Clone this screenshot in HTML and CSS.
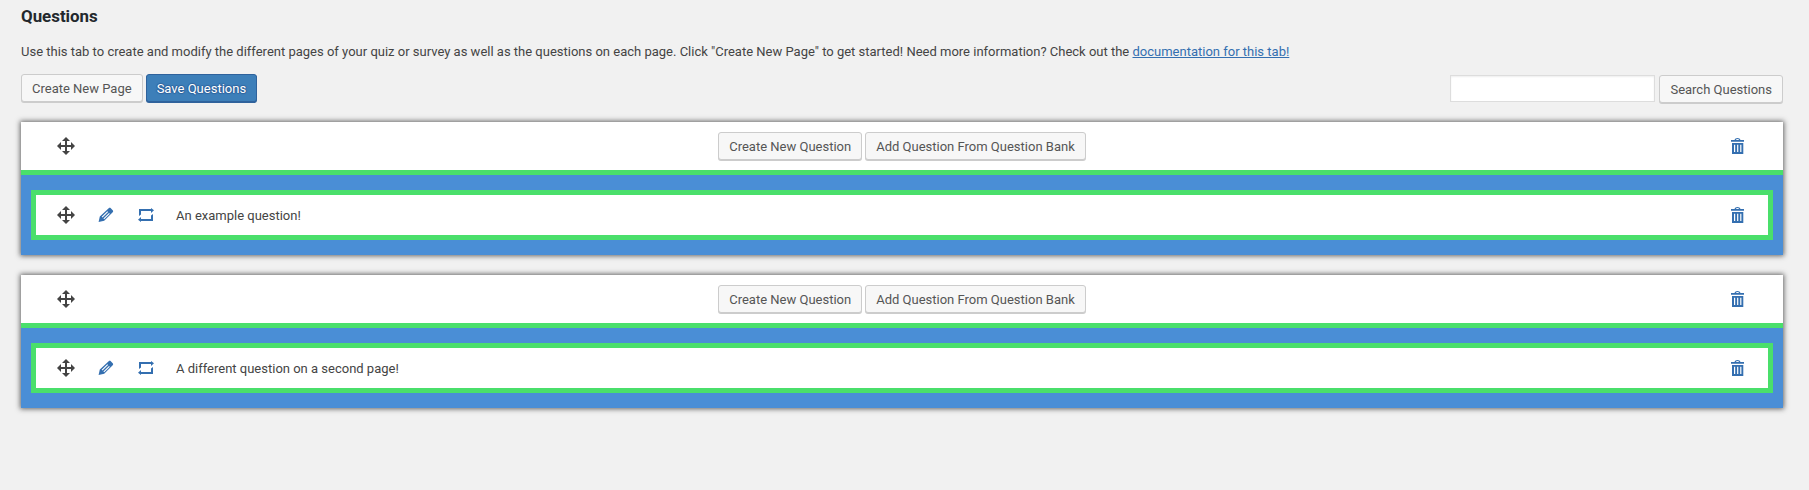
FILE: index.html
```html
<!DOCTYPE html>
<html lang="en">
<head>
<meta charset="utf-8">
<title>Questions</title>
<link rel="stylesheet" href="styles.css">
</head>
<body>
<svg class="sprite" aria-hidden="true">
  <symbol id="move" viewBox="0 0 20 20"><path d="M19 10l-4 4v-3h-4v4h3l-4 4-4-4h3v-4H5v3l-4-4 4-4v3h4V5H6l4-4 4 4h-3v4h4V6z"/></symbol>
  <symbol id="edit" viewBox="0 0 20 20"><path fill-rule="evenodd" d="M12.700 3.300c.6-.6 1.500-.6 2.100 0l1.900 1.900c.6.6.6 1.500 0 2.100L8.200 15.800 2.600 17l1.200-5.400zM11.300 6.200L5.700 11.800l.8.8 5.600-5.600zM13 7.900l-5.600 5.600.8.800 5.600-5.600z"/></symbol>
  <symbol id="repeat" viewBox="0 0 20 20"><path d="M3 11V4h12V3l3 2.300L15 8V6H5v3.500zM17 9v7H5v1l-3-2.300L5 12v2h10v-3.500z"/></symbol>
  <symbol id="trash" viewBox="0 0 20 20"><path fill-rule="evenodd" d="M3 5.800V4h3.500c.3-1.300 1.500-2 3-2s2.700.7 3 2H16v1.800zM7.800 4h3.400c-.3-.6-.9-.9-1.700-.9S8.100 3.400 7.800 4zM4 7h11.300v11H4zM6 8.700V16h1.200V8.700zm3.100 0V16h1.200V8.700zm3.100 0V16h1.200V8.700z"/></symbol>
</svg>
<main class="wrap">
  <h3 class="title">Questions</h3>
  <p class="intro">Use this tab to create and modify the different pages of your quiz or survey as well as the questions on each page. Click "Create New Page" to get started! Need more information? Check out the <a class="link" href="#">documentation for this tab!</a></p>
  <div class="toolbar">
    <div class="group">
      <button class="button">Create New Page</button>
      <button class="button primary">Save Questions</button>
    </div>
    <div class="group search">
      <input class="search-input" type="text" aria-label="Search">
      <button class="button">Search Questions</button>
    </div>
  </div>
  <section class="page">
    <header class="page-header">
      <svg class="icon handle"><use href="#move"/></svg>
      <div class="group">
        <button class="button">Create New Question</button>
        <button class="button">Add Question From Question Bank</button>
      </div>
      <svg class="icon"><use href="#trash"/></svg>
    </header>
    <div class="page-body">
      <div class="question">
        <svg class="icon handle"><use href="#move"/></svg>
        <svg class="icon"><use href="#edit"/></svg>
        <svg class="icon"><use href="#repeat"/></svg>
        <span class="question-text">An example question!</span>
        <svg class="icon"><use href="#trash"/></svg>
      </div>
    </div>
  </section>
  <section class="page">
    <header class="page-header">
      <svg class="icon handle"><use href="#move"/></svg>
      <div class="group">
        <button class="button">Create New Question</button>
        <button class="button">Add Question From Question Bank</button>
      </div>
      <svg class="icon"><use href="#trash"/></svg>
    </header>
    <div class="page-body">
      <div class="question">
        <svg class="icon handle"><use href="#move"/></svg>
        <svg class="icon"><use href="#edit"/></svg>
        <svg class="icon"><use href="#repeat"/></svg>
        <span class="question-text">A different question on a second page!</span>
        <svg class="icon"><use href="#trash"/></svg>
      </div>
    </div>
  </section>
</main>
</body>
</html>
```
FILE: styles.css
```css
* { box-sizing: border-box; }
body { margin: 0; background: #f1f1f1; color: #444; font: 13px/20px Roboto, sans-serif; }
.sprite { display: none; }
.wrap { padding: 6px 26px 0 21px; }
.title { margin: 0; color: #23282d; font-size: 16.9px; line-height: 20px; font-weight: 700; }
.intro { margin: 16px 0 12px; }
.link { color: #346fb0; text-decoration: underline; }
.toolbar { display: flex; justify-content: space-between; height: 48px; margin-bottom: 0; }
.group { display: flex; gap: 3px; align-items: flex-start; }
.search { padding-top: 1px; gap: 4px; }
.button { height: 28px; margin: 0; padding: 1px 10px 0; border: 1px solid #ccc; border-radius: 3px; background: #f7f7f7; box-shadow: 0 1px 0 #ccc; color: #555; font: 13px/26px Roboto, sans-serif; white-space: nowrap; }
.primary { border-color: #2f629c; background: #3d7fb9; box-shadow: 0 1px 0 #2f629c; color: #fff; text-shadow: 0 -1px 1px #2f629c, 1px 0 1px #2f629c, 0 1px 1px #2f629c, -1px 0 1px #2f629c; }
.search-input { width: 205px; height: 27px; margin: 0; padding: 3px 5px; border: 1px solid #ddd; background: #fff; box-shadow: inset 0 1px 2px rgba(0, 0, 0, .07); }
.page { margin-bottom: 20px; box-shadow: 0 0 5px 1px #666; }
.page-header { display: flex; justify-content: space-between; align-items: center; height: 53px; padding: 0 35px; border-bottom: 5px solid #4adf6b; background: #fff; }
.page-body { padding: 15px 10px; background: #4a8ed6; }
.question { display: flex; align-items: center; gap: 20px; height: 50px; padding: 0 20px; border: 5px solid #4adf6b; background: #fff; }
.question-text { flex: 1; padding-top: 1px; }
.icon { flex: none; width: 20px; height: 20px; fill: #346fb0; }
.handle { fill: #444; }
```
